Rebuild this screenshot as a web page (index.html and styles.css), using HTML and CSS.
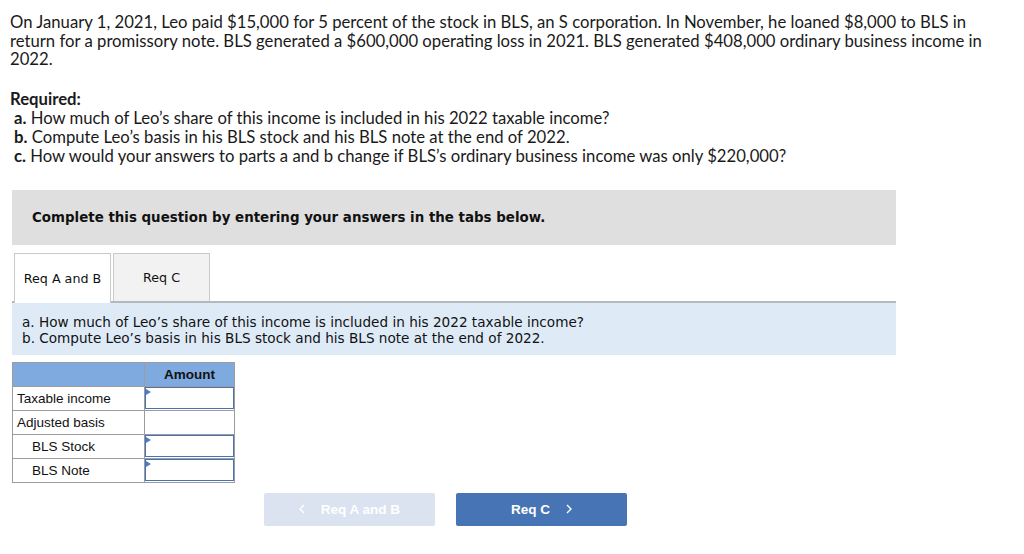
FILE: index.html
```html
<!DOCTYPE html>
<html>
<head>
<meta charset="utf-8">
<link rel="stylesheet" href="styles.css">
</head>
<body>
<div class="page">
  <p class="intro">On January 1, 2021, Leo paid $15,000 for 5 percent of the stock in BLS, an S corporation. In November, he loaned $8,000 to BLS in return for a promissory note. BLS generated a $600,000 operating loss in 2021. BLS generated $408,000 ordinary business income in 2022.</p>
  <div class="required">
    <div class="req-title">Required:</div>
    <div class="req-item"><b>a.</b> How much of Leo’s share of this income is included in his 2022 taxable income?</div>
    <div class="req-item"><b>b.</b> Compute Leo’s basis in his BLS stock and his BLS note at the end of 2022.</div>
    <div class="req-item"><b>c.</b> How would your answers to parts a and b change if BLS’s ordinary business income was only $220,000?</div>
  </div>

  <div class="panel">
    <div class="banner">Complete this question by entering your answers in the tabs below.</div>
    <div class="tabs">
      <div class="tab active">Req A and B</div>
      <div class="tab">Req C</div>
    </div>
    <div class="prompt">
      <div>a. How much of Leo’s share of this income is included in his 2022 taxable income?</div>
      <div>b. Compute Leo’s basis in his BLS stock and his BLS note at the end of 2022.</div>
    </div>
  </div>

  <table class="grid">
    <colgroup><col class="c1"><col class="c2"></colgroup>
    <thead>
      <tr><th></th><th>Amount</th></tr>
    </thead>
    <tbody>
      <tr><td class="lbl">Taxable income</td><td class="inp"><span class="field"></span></td></tr>
      <tr><td class="lbl">Adjusted basis</td><td class="blank"></td></tr>
      <tr><td class="lbl ind">BLS Stock</td><td class="inp"><span class="field"></span></td></tr>
      <tr><td class="lbl ind">BLS Note</td><td class="inp"><span class="field"></span></td></tr>
    </tbody>
  </table>

  <div class="nav">
    <div class="btn prev"><svg class="chev left" width="6" height="10" viewBox="0 0 6 10"><polyline points="5,1 1,5 5,9" fill="none" stroke="#fff" stroke-width="1.4"/></svg>Req A and B</div>
    <div class="btn next">Req C<svg class="chev right" width="6" height="10" viewBox="0 0 6 10"><polyline points="1,1 5,5 1,9" fill="none" stroke="#fff" stroke-width="1.4"/></svg></div>
  </div>
</div>
</body>
</html>
```

FILE: styles.css
```css
html, body {
  margin: 0;
  padding: 0;
  background: #fff;
}

.page {
  padding: 13px 0 0 10px;
  color: #1a1a1a;
}

.intro {
  margin: 0;
  width: 985px;
  font-family: "Lato", "Liberation Sans", sans-serif;
  font-size: 16.7px;
  line-height: 18.5px;
}

.required {
  margin-top: 21px;
  font-family: "Lato", "Liberation Sans", sans-serif;
  font-size: 16.7px;
  line-height: 19px;
}

.req-title {
  font-weight: bold;
}

.req-item {
  padding-left: 4px;
}

.panel {
  margin: 24px 0 0 2px;
  width: 884px;
}

.banner {
  background: #dfdfdf;
  height: 55px;
  padding-left: 20px;
  display: flex;
  align-items: center;
  font-family: "DejaVu Sans", Verdana, sans-serif;
  font-weight: bold;
  font-size: 13.4px;
  color: #111;
}

.tabs {
  display: flex;
  gap: 2px;
  margin-top: 8px;
  padding-left: 2px;
  border-bottom: 2px solid #b5b8bc;
}

.tab {
  width: 95px;
  height: 47px;
  border: 1px solid #c9c9c9;
  border-bottom: none;
  background: #f2f2f2;
  display: flex;
  align-items: center;
  justify-content: center;
  font-family: "DejaVu Sans", Verdana, sans-serif;
  font-size: 12.7px;
  color: #111;
}

.tab.active {
  background: #fff;
  margin-bottom: -2px;
  height: 49px;
}

.prompt {
  background: #deebf7;
  padding: 11px 10px 9px;
  font-family: "DejaVu Sans", Verdana, sans-serif;
  font-size: 13.6px;
  line-height: 16px;
  color: #111;
  height: 32px;
}

.grid {
  margin: 7px 0 0 2px;
  border-collapse: collapse;
  table-layout: fixed;
  width: 222px;
  font-family: "Liberation Sans", Arial, sans-serif;
  font-size: 13.5px;
  color: #111;
}

.grid col.c1 {
  width: 132px;
}

.grid col.c2 {
  width: 90px;
}

.grid th, .grid td {
  border: 1px solid #9c9c9c;
  padding: 0;
  height: 23px;
}

.grid thead th {
  background: #7faadf;
  font-weight: bold;
  color: #111;
}

.grid td.lbl {
  padding-left: 4px;
  text-align: left;
}

.grid td.ind {
  padding-left: 19px;
}

.field {
  display: block;
  height: 20px;
  border: 1px solid #4a72b0;
  position: relative;
}

.field::before {
  content: "";
  position: absolute;
  left: 0;
  top: 1px;
  border-top: 3px solid transparent;
  border-bottom: 3px solid transparent;
  border-left: 5px solid #4a7fc7;
}

.nav {
  display: flex;
  gap: 21px;
  margin: 10px 0 0 254px;
}

.btn {
  width: 171px;
  height: 33px;
  border-radius: 2px;
  display: flex;
  align-items: center;
  justify-content: center;
  font-family: "Liberation Sans", Arial, sans-serif;
  font-weight: bold;
  font-size: 13.5px;
  color: #fff;
}

.btn.prev {
  background: #dae3ef;
}

.btn.next {
  background: #4774b4;
}

.chev.left {
  margin-right: 16px;
}

.chev.right {
  margin-left: 16px;
}
```
